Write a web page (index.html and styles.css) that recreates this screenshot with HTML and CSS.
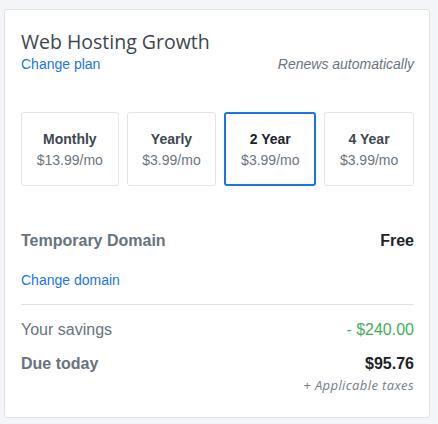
FILE: index.html
```html
<!DOCTYPE html>
<html lang="en">
<head>
<meta charset="utf-8">
<title>Plan summary</title>
<link rel="stylesheet" href="styles.css">
</head>
<body>
<div class="card">
  <h1 class="title">Web Hosting Growth</h1>
  <div class="sub-row">
    <a class="link" href="#">Change plan</a>
    <span class="renews">Renews automatically</span>
  </div>
  <div class="terms">
    <div class="term"><div class="term-name">Monthly</div><div class="term-price">$13.99/mo</div></div>
    <div class="term"><div class="term-name">Yearly</div><div class="term-price">$3.99/mo</div></div>
    <div class="term selected"><div class="term-name">2 Year</div><div class="term-price">$3.99/mo</div></div>
    <div class="term"><div class="term-name">4 Year</div><div class="term-price">$3.99/mo</div></div>
  </div>
  <div class="row domain-row">
    <span class="label-bold">Temporary Domain</span>
    <span class="value-bold">Free</span>
  </div>
  <a class="link domain-link" href="#">Change domain</a>
  <div class="divider"></div>
  <div class="row savings-row">
    <span class="label">Your savings</span>
    <span class="savings">- $240.00</span>
  </div>
  <div class="row due-row">
    <span class="label-bold">Due today</span>
    <span class="value-bold">$95.76</span>
  </div>
  <div class="taxes">+ Applicable taxes</div>
</div>
</body>
</html>
```
FILE: styles.css
```css
* { box-sizing: border-box; }
html, body { margin: 0; padding: 0; }
body {
  background: #f4f5f8;
  font-family: "Liberation Sans", Arial, sans-serif;
  padding: 9px 8px 6px 4px;
}
.card {
  background: #fff;
  border: 1px solid #dde0e5;
  border-radius: 3px;
  padding: 20px 15px 0 16px;
  height: 409px;
}
.title {
  margin: 0;
  font-family: "Open Sans", sans-serif;
  font-weight: 400;
  font-size: 19.5px;
  line-height: 24px;
  color: #3b4651;
}
.sub-row {
  display: flex;
  justify-content: space-between;
  align-items: baseline;
  margin-top: 1px;
}
.link {
  color: #1a73e8;
  text-decoration: none;
  font-size: 14px;
  line-height: 18px;
}
.renews {
  font-style: italic;
  font-size: 14px;
  color: #6b7580;
}
.terms {
  display: flex;
  gap: 8px;
  margin-top: 39px;
}
.term {
  flex: 1 1 auto;
  min-width: 0;
  height: 74px;
  border: 1px solid #e1e4e8;
  border-radius: 3px;
  display: flex;
  flex-direction: column;
  align-items: center;
  justify-content: center;
  padding: 0 12px;
}
.term.selected {
  border: 2px solid #1a73e8;
}
.term-name {
  font-weight: 700;
  font-size: 14px;
  line-height: 18px;
  color: #3d4751;
}
.selected .term-name { color: #1b2228; }
.term-price {
  font-size: 14px;
  line-height: 18px;
  color: #6b7580;
  margin-top: 3px;
}
.row {
  display: flex;
  justify-content: space-between;
  align-items: baseline;
}
.domain-row { margin-top: 45px; }
.label-bold {
  font-weight: 700;
  font-size: 16px;
  line-height: 20px;
  color: #68737d;
}
.value-bold {
  font-weight: 700;
  font-size: 16px;
  line-height: 20px;
  color: #1b2228;
}
.label {
  font-size: 16px;
  line-height: 20px;
  color: #68737d;
}
.domain-link {
  display: block;
  margin-top: 20px;
}
.divider {
  height: 1px;
  background: #dfe2e6;
  margin-top: 15px;
}
.savings-row { margin-top: 15px; }
.savings {
  font-size: 16px;
  line-height: 20px;
  color: #3fae5a;
}
.due-row { margin-top: 14px; }
.taxes {
  text-align: right;
  font-family: "Open Sans", sans-serif;
  font-style: italic;
  font-size: 13px;
  line-height: 16px;
  letter-spacing: 0.4px;
  color: #747d87;
  margin-top: 3px;
}
```
